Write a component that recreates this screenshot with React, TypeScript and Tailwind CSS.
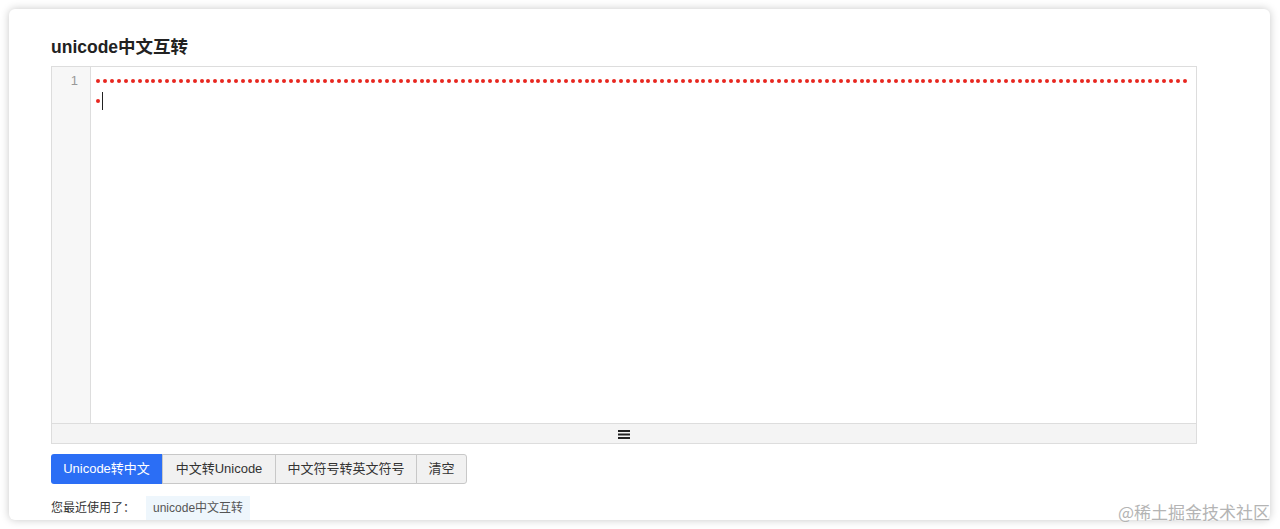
const LINE_ONE = 159;

function Dots({ count }: { count: number }) {
  return (
    <>
      {Array.from({ length: count }).map((_, i) => (
        <span key={i} className="inline-flex h-5 w-[6.88px] items-center justify-center">
          <span className="h-[4px] w-[4px] rounded-full bg-[#e8261f]" />
        </span>
      ))}
    </>
  );
}

function Editor() {
  return (
    <div className="flex h-[378px] w-[1146px] flex-col border border-[#dddddd] bg-white">
      <div className="flex flex-1">
        <div className="w-[39px] shrink-0 border-r border-[#dddddd] bg-[#f7f7f7] pt-[4px] pr-[12px] text-right text-[13px] leading-5 text-[#999999]">
          1
        </div>
        <div className="flex-1 pl-[4px] pt-[4px]">
          <div className="flex h-5">
            <Dots count={LINE_ONE} />
          </div>
          <div className="flex h-5 items-center">
            <Dots count={1} />
            <span className="h-[18px] w-px bg-[#222222]" />
          </div>
        </div>
      </div>
      <div className="flex h-[20px] items-center justify-center border-t border-[#dddddd] bg-[#f4f4f4]">
        <svg width="12" height="10" viewBox="0 0 12 10">
          <rect x="0" y="1" width="12" height="2" fill="#222" />
          <rect x="0" y="4.5" width="12" height="2" fill="#222" />
          <rect x="0" y="8" width="12" height="2" fill="#222" />
        </svg>
      </div>
    </div>
  );
}

export default function App() {
  return (
    <div
      className="relative flex h-[529px] w-[1280px] bg-white p-[9px] pr-[10px]"
      style={{ fontFamily: '"Liberation Sans", "Noto Sans CJK SC", sans-serif' }}
    >
      <div className="flex flex-1 flex-col rounded-md bg-white pl-[42px] pt-[27px] shadow-[0_0_8px_rgba(0,0,0,0.22)]">
        <h1 className="text-[17.5px] font-bold leading-[22px] text-[#222222]">unicode中文互转</h1>
        <div className="mt-[8px]">
          <Editor />
        </div>
        <div className="mt-[10px] flex h-[31px] text-[13px]">
          <button className="w-[111px] rounded-l-[3px] bg-[#2b6ef5] text-white">Unicode转中文</button>
          <button className="w-[114px] border border-[#c8c8c8] bg-[#f1f1f1] text-[#333333]">中文转Unicode</button>
          <button className="-ml-px w-[142px] border border-[#c8c8c8] bg-[#f1f1f1] text-[#333333]">中文符号转英文符号</button>
          <button className="-ml-px w-[51px] rounded-r-[3px] border border-[#c8c8c8] bg-[#f1f1f1] text-[#333333]">清空</button>
        </div>
        <div className="mt-[12px] flex items-center text-[12px] text-[#333333]">
          <span>您最近使用了：</span>
          <span className="ml-[11px] bg-[#eef6fc] px-[7px] py-[3px] text-[#555555]">unicode中文互转</span>
        </div>
      </div>
      <div
        className="absolute bottom-[5px] right-[10px] text-[17px] leading-6 text-[#b4b4b4]"
        style={{ fontFamily: '"Noto Sans CJK SC", sans-serif', textShadow: "0 0 2px #fff" }}
      >
        @稀土掘金技术社区
      </div>
    </div>
  );
}
